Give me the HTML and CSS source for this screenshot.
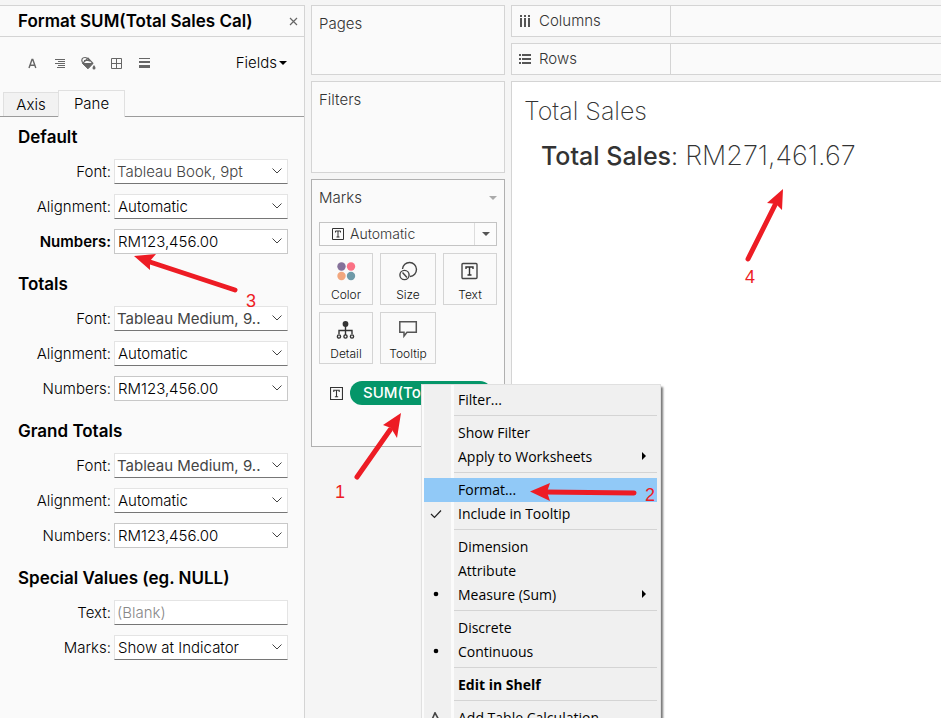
FILE: index.html
```html
<!DOCTYPE html>
<html lang="en">
<head>
<meta charset="utf-8">
<title>Format SUM(Total Sales Cal)</title>
<link rel="stylesheet" href="styles.css">
</head>
<body>
<div class="app">
  <aside class="format">
    <header class="format-head">
      <h1>Format SUM(Total Sales Cal)</h1>
      <button class="close" type="button" aria-label="Close"><svg width="9" height="9" viewBox="0 0 9 9"><path d="M1 1l7 7M8 1L1 8" stroke="#666" stroke-width="1.2"/></svg></button>
    </header>
    <div class="toolbar">
      <button type="button" aria-label="Font"><svg width="14" height="14" viewBox="0 0 14 14"><path d="M4 12L7 3.500h.8L10.800 12M5 9.200h4.800" fill="none" stroke="#666" stroke-width="1.400"/></svg></button>
      <button type="button" aria-label="Alignment"><svg width="14" height="14" viewBox="0 0 14 14"><path d="M2 3.500h10M5 5.500h7M2 7.500h10M5 9.500h7M4 11.500h8" stroke="#666"/></svg></button>
      <button type="button" aria-label="Shading"><svg width="16" height="14" viewBox="0 0 16 14"><path d="M2.500 7.500L8 12.800L13 7.500z" fill="#666" stroke="#666"/><path d="M2.500 7.500L8 2l5 5.500M2.500 6.500C1 4 2 1.500 5 1.500c2 0 3 1 4.500 4M4 4.500h5" fill="none" stroke="#666" stroke-width="1.200"/><path d="M14 9c1 1.500 1.500 2.200 1.500 3a1.500 1.500 0 0 1-3 0c0-.8.5-1.500 1.500-3z" fill="#666"/></svg></button>
      <button type="button" aria-label="Borders"><svg width="14" height="14" viewBox="0 0 14 14"><path d="M2.500 2.500h10v10h-10zM7.500 2.500v10M2.500 7.500h10" fill="none" stroke="#666"/></svg></button>
      <button type="button" aria-label="Lines"><svg width="14" height="14" viewBox="0 0 14 14"><path d="M2 2h11v1H2zM2 5h11v2H2zM2 9h11v3H2z" fill="#666"/></svg></button>
      <button class="fields" type="button">Fields<svg width="8" height="4" viewBox="0 0 8 4"><path d="M0 0h8L4 4z"/></svg></button>
    </div>
    <nav class="tabs">
      <button class="tab" type="button">Axis</button>
      <button class="tab tab-on" type="button">Pane</button>
    </nav>
    <form class="sections">
      <section>
        <h2>Default</h2>
        <div class="row"><label for="f1">Font:</label><span class="combo"><select id="f1" class="face"><option>Tableau Book, 9pt</option></select><svg class="chev" viewBox="0 0 10 6"><path d="M.5.500L5 5L9.500.500"/></svg></span></div>
        <div class="row"><label for="a1">Alignment:</label><span class="combo"><select id="a1"><option>Automatic</option></select><svg class="chev" viewBox="0 0 10 6"><path d="M.5.500L5 5L9.500.500"/></svg></span></div>
        <div class="row"><label for="n1" class="strong">Numbers:</label><span class="combo"><select id="n1" class="boxed"><option>RM123,456.00</option></select><svg class="chev" viewBox="0 0 10 6"><path d="M.5.500L5 5L9.500.500"/></svg></span></div>
      </section>
      <section>
        <h2>Totals</h2>
        <div class="row"><label for="f2">Font:</label><span class="combo"><select id="f2" class="face medium"><option>Tableau Medium, 9..</option></select><svg class="chev" viewBox="0 0 10 6"><path d="M.5.500L5 5L9.500.500"/></svg></span></div>
        <div class="row"><label for="a2">Alignment:</label><span class="combo"><select id="a2"><option>Automatic</option></select><svg class="chev" viewBox="0 0 10 6"><path d="M.5.500L5 5L9.500.500"/></svg></span></div>
        <div class="row"><label for="n2">Numbers:</label><span class="combo"><select id="n2" class="boxed"><option>RM123,456.00</option></select><svg class="chev" viewBox="0 0 10 6"><path d="M.5.500L5 5L9.500.500"/></svg></span></div>
      </section>
      <section>
        <h2>Grand Totals</h2>
        <div class="row"><label for="f3">Font:</label><span class="combo"><select id="f3" class="face medium"><option>Tableau Medium, 9..</option></select><svg class="chev" viewBox="0 0 10 6"><path d="M.5.500L5 5L9.500.500"/></svg></span></div>
        <div class="row"><label for="a3">Alignment:</label><span class="combo"><select id="a3"><option>Automatic</option></select><svg class="chev" viewBox="0 0 10 6"><path d="M.5.500L5 5L9.500.500"/></svg></span></div>
        <div class="row"><label for="n3">Numbers:</label><span class="combo"><select id="n3" class="boxed"><option>RM123,456.00</option></select><svg class="chev" viewBox="0 0 10 6"><path d="M.5.500L5 5L9.500.500"/></svg></span></div>
      </section>
      <section>
        <h2>Special Values (eg. NULL)</h2>
        <div class="row"><label for="t4">Text:</label><span class="combo"><input id="t4" type="text" placeholder="(Blank)"></span></div>
        <div class="row"><label for="m4">Marks:</label><span class="combo"><select id="m4"><option>Show at Indicator</option></select><svg class="chev" viewBox="0 0 10 6"><path d="M.5.500L5 5L9.500.500"/></svg></span></div>
      </section>
    </form>
  </aside>

  <div class="cards">
    <section class="card pages"><h3>Pages</h3></section>
    <section class="card filters"><h3>Filters</h3></section>
    <section class="card marks">
      <div class="marks-head"><h3>Marks</h3><svg width="8" height="4" viewBox="0 0 8 4"><path d="M0 0h8L4 4z" fill="#aaa"/></svg></div>
      <div class="marktype">
        <svg class="t-icon" width="12" height="12" viewBox="0 0 12 12"><path d="M.5.500h11v11H.500z"/><path d="M3.500 4.500v-1.500h5v1.500M6 3v6M4.500 9h3"/></svg>
        <select aria-label="Mark type"><option>Automatic</option></select>
        <span class="drop"><svg width="8" height="4" viewBox="0 0 8 4"><path d="M0 0h8L4 4z" fill="#555"/></svg></span>
      </div>
      <div class="shelf-buttons">
        <button type="button"><svg width="20" height="20" viewBox="0 0 20 20"><circle cx="5.500" cy="5.500" r="4.200" fill="#85719a"/><circle cx="15" cy="5.500" r="4.200" fill="#fb7185"/><circle cx="5.500" cy="15" r="4.200" fill="#f2a77e"/><circle cx="15" cy="15" r="4.200" fill="#6f9aa8"/></svg>Color</button>
        <button type="button"><svg width="20" height="20" viewBox="0 0 20 20" fill="none" stroke="#444" stroke-width="1.400"><path d="M4.500 8A7 7 0 1 1 12 15.500"/><circle cx="6.500" cy="14" r="4.600"/><path d="M4.500 11.500l4.500 5"/></svg>Size</button>
        <button type="button"><svg width="20" height="20" viewBox="0 0 20 20" fill="none" stroke="#444" stroke-width="1.400"><rect x="2" y="2.500" width="15" height="15" rx="1"/><path d="M6 8V6h7v2M9.500 6v8M7.500 14h4" stroke="#333"/></svg>Text</button>
        <button type="button"><svg width="20" height="20" viewBox="0 0 20 20" fill="none" stroke="#333" stroke-width="1.400"><circle cx="9.500" cy="4" r="2.900" fill="#333" stroke="none"/><path d="M9.500 6v9M3 14v-3.500h13V14"/><circle cx="3" cy="16.500" r="1.600" fill="#fafafa"/><circle cx="9.500" cy="16.500" r="1.600" fill="#fafafa"/><circle cx="16" cy="16.500" r="1.600" fill="#fafafa"/></svg>Detail</button>
        <button type="button"><svg width="20" height="20" viewBox="0 0 20 20" fill="none" stroke="#555" stroke-width="1.500"><path d="M1.800 1.700h16.500v10.500H9L6 16v-3.800H1.800z"/></svg>Tooltip</button>
      </div>
      <div class="pill-row">
        <svg class="t-icon" width="13" height="13" viewBox="0 0 12 12"><path d="M.5.500h11v11H.500z"/><path d="M3.500 4.500v-1.500h5v1.500M6 3v6M4.500 9h3"/></svg>
        <button class="pill" type="button">SUM(To</button>
        <div class="menu" role="menu">
          <button role="menuitem">Filter...</button>
          <hr>
          <button role="menuitem">Show Filter</button>
          <button role="menuitem">Apply to Worksheets<svg class="sub" viewBox="0 0 4 8"><path d="M0 0l4 4-4 4z"/></svg></button>
          <hr>
          <button role="menuitem" class="hot">Format...</button>
          <button role="menuitem"><svg class="mark" viewBox="0 0 12 12"><path d="M1 6l3.500 3.500 6.500-7" fill="none" stroke="#222" stroke-width="1.200"/></svg>Include in Tooltip</button>
          <hr>
          <button role="menuitem">Dimension</button>
          <button role="menuitem">Attribute</button>
          <button role="menuitem"><svg class="mark" viewBox="0 0 12 12"><circle cx="6" cy="5" r="2.300"/></svg>Measure (Sum)<svg class="sub" viewBox="0 0 4 8"><path d="M0 0l4 4-4 4z"/></svg></button>
          <hr>
          <button role="menuitem">Discrete</button>
          <button role="menuitem"><svg class="mark" viewBox="0 0 12 12"><circle cx="6" cy="5" r="2.300"/></svg>Continuous</button>
          <hr>
          <button role="menuitem" class="bold">Edit in Shelf</button>
          <hr>
          <button role="menuitem"><svg class="mark" viewBox="0 0 12 12"><path d="M1 10L5 .800l5 9.200z" fill="none" stroke="#444" stroke-width="1.600"/></svg>Add Table Calculation...</button>
        </div>
      </div>
    </section>
  </div>

  <main class="work">
    <div class="shelf"><div class="shelf-name"><svg width="12" height="12" viewBox="0 0 12 12" fill="#555"><path d="M1 0h2v2H1zM5 0h2v2H5zM9 0h2v2H9zM1 3h2v9H1zM5 3h2v9H5zM9 3h2v9H9z"/></svg>Columns</div></div>
    <div class="shelf"><div class="shelf-name"><svg width="12" height="12" viewBox="0 0 12 12" fill="#555"><path d="M0 1h2v2H0zM0 5h2v2H0zM0 9h2v2H0zM3 1h9v2H3zM3 5h9v2H3zM3 9h9v2H3z"/></svg>Rows</div></div>
    <section class="view">
      <h2>Total Sales</h2>
      <p><b>Total Sales</b>: <span class="amount">RM271,461.67</span></p>
    </section>
  </main>

  <svg class="notes" width="941" height="718" viewBox="0 0 941 718">
    <g stroke="#ed1c24" stroke-width="5" stroke-linecap="round">
      <path d="M357 477L390 430"/><path d="M634 493L545 492"/><path d="M235 290L150 262"/><path d="M748 259L775 205"/>
    </g>
    <g fill="#ed1c24">
      <path d="M401 413L383 425L391 428L397 438z"/>
      <path d="M530 491.500L550 483L547 492L550 501z"/>
      <path d="M134 256L156 254L150 261L150 270z"/>
      <path d="M783 189L767 203L776 204L782 210z"/>
      <text x="335" y="498">1</text><text x="645" y="501">2</text><text x="246" y="307">3</text><text x="745" y="283">4</text>
    </g>
  </svg>
</div>
</body>
</html>
```
FILE: styles.css
```css
* { box-sizing: border-box; }

body {
  margin: 0;
  background: #f5f5f5;
  color: #000;
  font: 300 15px/20px Inter, "Liberation Sans", sans-serif;
}

button, select, input {
  margin: 0;
  padding: 0;
  border: 0;
  border-radius: 0;
  background: none;
  color: inherit;
  font: inherit;
}

h1, h2, h3, p { margin: 0; font-size: inherit; font-weight: inherit; }
svg { display: block; flex: none; }

.app {
  position: relative;
  display: grid;
  grid-template-columns: 305px 194px 1fr;
  column-gap: 6px;
  height: 100vh;
  padding-top: 5px;
  overflow: hidden;
}

/* Format pane */
.format {
  border: 1px solid #d4d4d4;
  border-width: 1px 1px 0 0;
  background: #fafafa;
}

.format-head {
  display: flex;
  align-items: center;
  justify-content: space-between;
  height: 31px;
  padding: 0 6px 0 18px;
  border-bottom: 1px solid #d4d4d4;
}

.format-head h1 {
  font-size: 17px;
  font-weight: 600;
}

.toolbar {
  display: flex;
  align-items: center;
  gap: 8px;
  height: 53px;
  padding: 0 17px 2px 22px;
}

.toolbar button {
  display: grid;
  place-items: center;
  width: 20px;
  height: 20px;
}

.toolbar .fields {
  display: flex;
  align-items: center;
  gap: 2px;
  width: auto;
  margin-left: auto;
}

.tabs {
  display: flex;
  align-items: flex-end;
  height: 27px;
  padding-left: 3px;
  box-shadow: inset 0 -1px #9b9b9b;
}

.tab {
  width: 55px;
  height: 24px;
  margin-bottom: 1px;
  border: 1px solid #e0e0e0;
  border-width: 1px 0 0 1px;
  background: #f2f2f2;
}

.tab-on {
  width: 67px;
  height: 27px;
  margin-bottom: 0;
  border-width: 1px 1px 0;
  background: #fafafa;
}

.sections {
  display: grid;
  gap: 20px;
  padding: 10px 16px 0 18px;
}

.sections section { display: grid; gap: 10px; }

.sections h2 {
  height: 22px;
  font-size: 17px;
  font-weight: 600;
  line-height: 20px;
}

.row {
  display: flex;
  align-items: center;
  height: 25px;
}

.row label {
  flex: 1;
  padding-right: 3px;
  text-align: right;
}

.row .strong { font-weight: 600; }

.combo {
  position: relative;
  width: 174px;
  height: 25px;
}

.combo select,
.combo input {
  width: 100%;
  height: 100%;
  padding: 0 26px 0 3px;
  border: 1px solid #e4e4e4;
  border-bottom-color: #767676;
  background: #fff;
  appearance: none;
}

.combo input { padding-left: 2px; }
.combo input::placeholder { color: #888; opacity: 1; }
.combo .boxed { border-color: #c8c8c8; }
.combo .face { padding-top: 1px; padding-left: 2px; color: #444; }
.combo .medium { font-weight: 400; }

.chev {
  position: absolute;
  top: 9px;
  right: 6px;
  width: 10px;
  height: 6px;
  fill: none;
  stroke: #444;
  pointer-events: none;
}

/* Cards */
.cards {
  display: flex;
  flex-direction: column;
  gap: 6px;
  color: #333;
}

.card {
  padding: 8px 7px;
  border: 1px solid #d4d4d4;
  background: #fafafa;
}

.pages { height: 70px; }
.filters { height: 92px; }
.marks { height: 268px; border-color: #b0b0b0; }

.marks-head {
  display: flex;
  align-items: center;
  justify-content: space-between;
}

.marktype {
  display: flex;
  align-items: center;
  height: 24px;
  margin-top: 14px;
  padding-left: 12px;
  border: 1px solid #c4c4c4;
  background: #fcfcfc;
}

.marktype select {
  flex: 1;
  min-width: 0;
  padding-left: 6px;
  font-size: 14px;
  appearance: none;
}

.drop {
  display: grid;
  place-items: center;
  width: 22px;
  height: 22px;
  border-left: 1px solid #ddd;
}

.t-icon { fill: none; stroke: #333; }

.shelf-buttons {
  display: grid;
  grid-template-columns: 54fr 56fr 54fr;
  gap: 7px;
  margin-top: 7px;
}

.shelf-buttons button {
  display: flex;
  flex-direction: column;
  align-items: center;
  gap: 7px;
  height: 52px;
  padding-top: 7px;
  border: 1px solid #d4d4d4;
  color: #111;
  font-size: 12px;
  line-height: 14px;
}

.pill-row {
  position: relative;
  display: flex;
  align-items: center;
  gap: 7px;
  margin-top: 17px;
  padding-left: 11px;
}

.pill {
  width: 142px;
  height: 24px;
  padding-left: 13px;
  border-radius: 12px;
  background: #059669;
  color: #fff;
  font-weight: 500;
  text-align: left;
}

/* Context menu */
.menu {
  position: absolute;
  z-index: 2;
  top: 3px;
  left: 102px;
  width: 240px;
  padding: 3px 2px;
  border: 1px solid #e0e0e0;
  background: linear-gradient(90deg, #fbfbfb 2px, #f0f0f0 2px 29px, #fbfbfb 29px 32px, #f0f0f0 32px);
  box-shadow: 2px 3px 2px #777;
  color: #000;
  font: 400 14px/24px "Open Sans", "Noto Sans", sans-serif;
}

.menu button {
  position: relative;
  display: block;
  width: 233px;
  height: 24px;
  padding-left: 34px;
  text-align: left;
}

.menu hr {
  height: 9px;
  margin: 0 0 0 30px;
  border: 0;
  background: linear-gradient(#d4d4d4, #d4d4d4) 0 3px / 203px 1px no-repeat;
}

.menu .hot { background: #91c9f7; }
.menu .bold { font-weight: 700; }

.sub {
  position: absolute;
  top: 7px;
  right: 11px;
  width: 4px;
  height: 8px;
}

.mark {
  position: absolute;
  top: 6px;
  left: 6px;
  width: 12px;
  height: 12px;
}

/* Worksheet */
.work {
  display: flex;
  flex-direction: column;
  gap: 6px;
  color: #333;
}

.shelf {
  height: 32px;
  border: 1px solid #d4d4d4;
  border-right: 0;
  background: #fafafa;
}

.shelf-name {
  display: flex;
  align-items: center;
  gap: 8px;
  width: 159px;
  height: 30px;
  padding-left: 7px;
  border-right: 1px solid #d4d4d4;
}

.view {
  flex: 1;
  padding: 12px;
  border: 1px solid #d4d4d4;
  border-width: 1px 0 0 1px;
  background: #fff;
  font-size: 25px;
  line-height: 34px;
}

.view h2 { font-weight: 200; }
.view p { padding: 11px 0 0 17px; }
.view b { font-weight: 500; }
.amount { font-size: 27px; font-weight: 200; }

/* Numbered callouts */
.notes {
  position: absolute;
  z-index: 3;
  top: 0;
  left: 0;
  pointer-events: none;
  font: 400 18px "Liberation Sans", sans-serif;
}
```
